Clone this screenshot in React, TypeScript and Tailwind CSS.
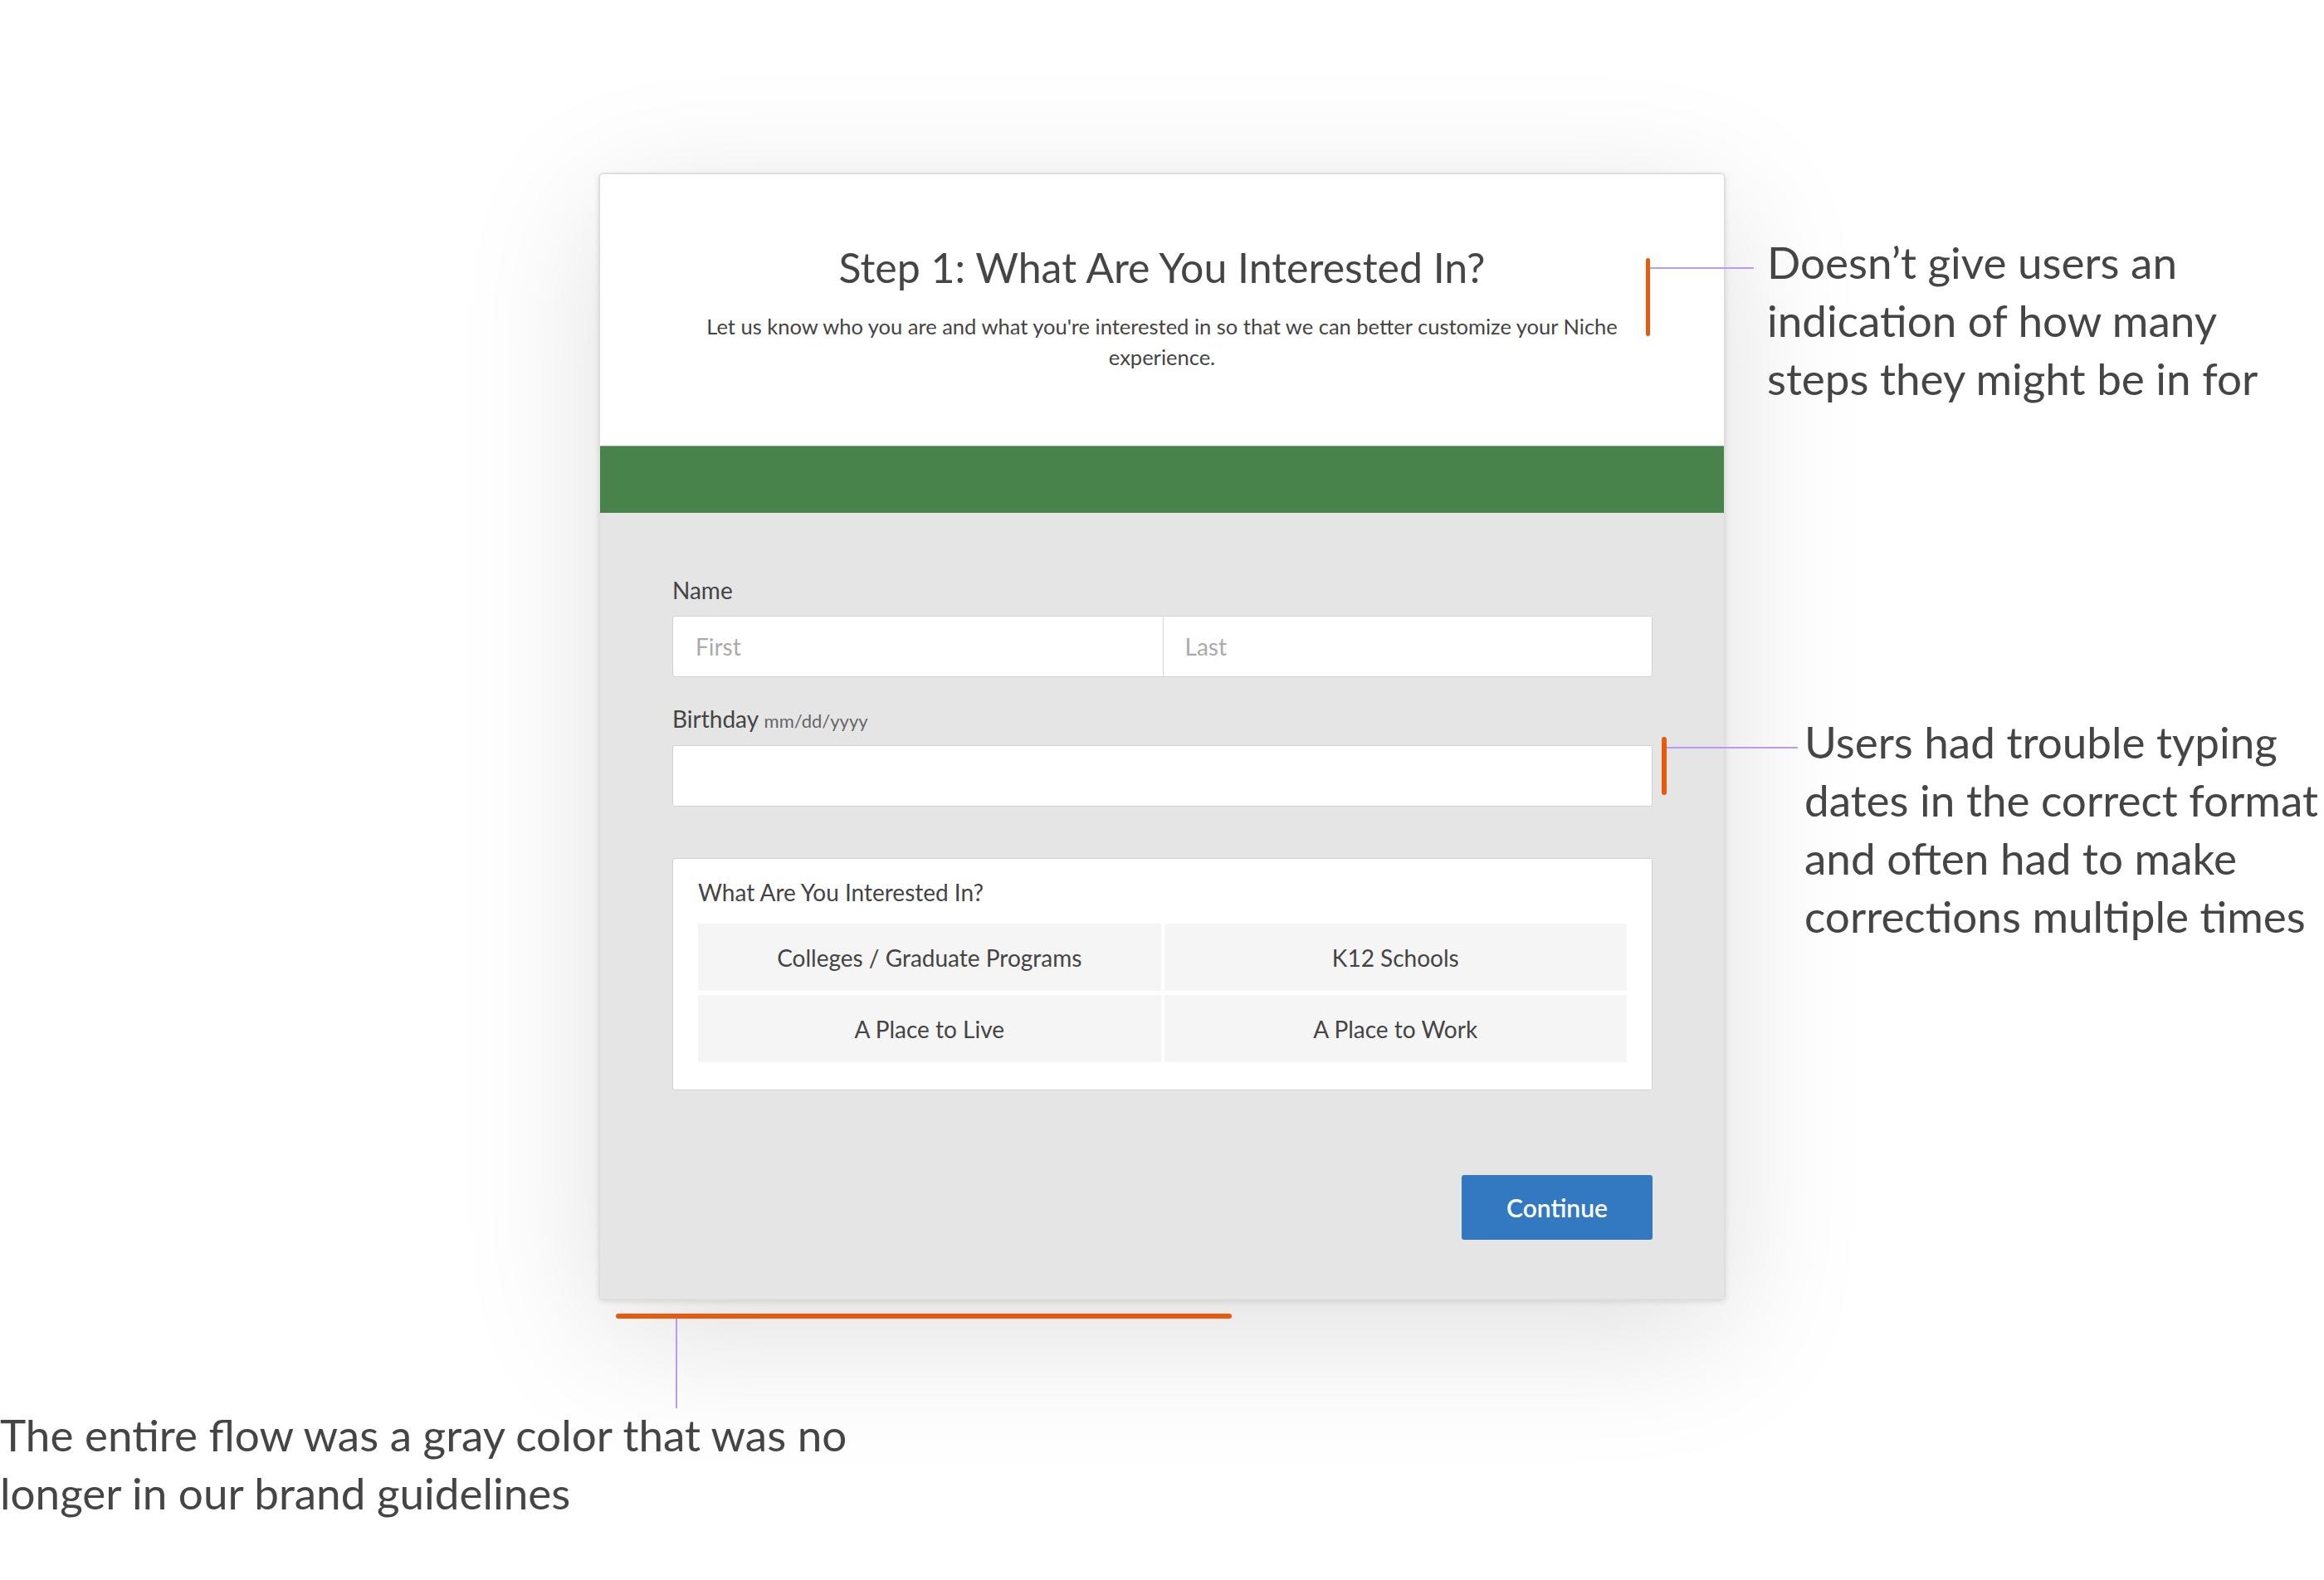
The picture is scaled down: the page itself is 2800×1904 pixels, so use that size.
import React from "react"

const interests = [
  "Colleges / Graduate Programs",
  "K12 Schools",
  "A Place to Live",
  "A Place to Work",
]

function Note({ lines }: { lines: string[] }) {
  return (
    <p className="text-[53px] leading-[70px] text-[#454545] whitespace-nowrap">
      {lines.map((line) => (
        <span key={line} className="block">
          {line}
        </span>
      ))}
    </p>
  )
}

export default function App() {
  return (
    <div className="relative w-[2800px] h-[1904px] overflow-hidden bg-white font-['Lato',sans-serif] text-[#444]">
      <div className="pt-[208px] pl-[721px]">
        {/* Card */}
        <div className="w-[1358px] rounded-[6px] border-2 border-[#dedede] overflow-hidden shadow-[0_40px_170px_rgba(0,0,0,0.13),0_2px_6px_rgba(0,0,0,0.1)]">
          <div className="bg-white pt-[81px] pb-[88px] text-center">
            <h1 className="text-[50px] leading-[62px] text-[#454545]">Step 1: What Are You Interested In?</h1>
            <p className="mx-auto mt-[22px] max-w-[1130px] text-[25.5px] leading-[37px] text-[#444]">
              Let us know who you are and what you're interested in so that we can better customize your Niche experience.
            </p>
          </div>

          <div className="h-[81px] bg-[#47834a] border-t border-[#8fae90]" />

          <div className="bg-[#e5e5e5] pt-[77px] pb-[71px] pl-[87px] pr-[86px]">
            <label className="block text-[28px] leading-[32px]">Name</label>
            <div className="mt-[15px] grid h-[74px] grid-cols-2 rounded-[3px] border border-[#d2d2d2] bg-white">
              <input
                placeholder="First"
                className="min-w-0 bg-transparent px-[27px] text-[28px] outline-none placeholder:text-[#aaa]"
              />
              <input
                placeholder="Last"
                className="min-w-0 border-l border-[#d6d6d6] bg-transparent px-[26px] text-[28px] outline-none placeholder:text-[#aaa]"
              />
            </div>

            <label className="mt-[34px] block text-[28px] leading-[32px]">
              Birthday <span className="text-[22px] leading-none text-[#666]">mm/dd/yyyy</span>
            </label>
            <div className="mt-[16px] h-[74px] rounded-[3px] border border-[#d2d2d2] bg-white" />

            <div className="mt-[62px] rounded-[3px] border border-[#d2d2d2] bg-white px-[30px] pt-[24px] pb-[33px]">
              <div className="text-[28px] leading-[32px]">What Are You Interested In?</div>
              <div className="mt-[22px] grid grid-cols-2 gap-x-[4px] gap-y-[5px]">
                {interests.map((item) => (
                  <div key={item} className="flex h-[81px] items-center justify-center bg-[#f5f5f5] text-[28px]">
                    {item}
                  </div>
                ))}
              </div>
            </div>

            <div className="mt-[102px] flex justify-end">
              <button className="h-[78px] w-[230px] rounded-[3px] bg-[#3279c2] text-[30px] font-semibold text-white">
                Continue
              </button>
            </div>
          </div>
        </div>
      </div>

      {/* Callout: header has no step count */}
      <div className="absolute left-[1983px] top-[281px] flex items-start">
        <div className="mt-[30px] h-[94px] w-[5px] rounded-full bg-[#e85a0c]" />
        <div className="mt-[41px] h-[2px] w-[125px] bg-[#b99af2]" />
        <div className="ml-[16px]">
          <Note lines={["Doesn’t give users an", "indication of how many", "steps they might be in for"]} />
        </div>
      </div>

      {/* Callout: birthday format */}
      <div className="absolute left-[2002px] top-[859px] flex items-start">
        <div className="mt-[29px] h-[70px] w-[6px] rounded-full bg-[#e85a0c]" />
        <div className="mt-[41px] h-[2px] w-[158px] bg-[#b99af2]" />
        <div className="ml-[8px]">
          <Note
            lines={[
              "Users had trouble typing",
              "dates in the correct format",
              "and often had to make",
              "corrections multiple times",
            ]}
          />
        </div>
      </div>

      {/* Callout: gray color */}
      <div className="absolute left-0 top-[1583px] flex flex-col">
        <div className="ml-[742px] h-[6px] w-[742px] rounded-full bg-[#e85a0c]" />
        <div className="ml-[814px] h-[108px] w-[2px] bg-[#b99af2]" />
        <div className="-mt-[3px]">
          <Note lines={["The entire flow was a gray color that was no", "longer in our brand guidelines"]} />
        </div>
      </div>
    </div>
  )
}
